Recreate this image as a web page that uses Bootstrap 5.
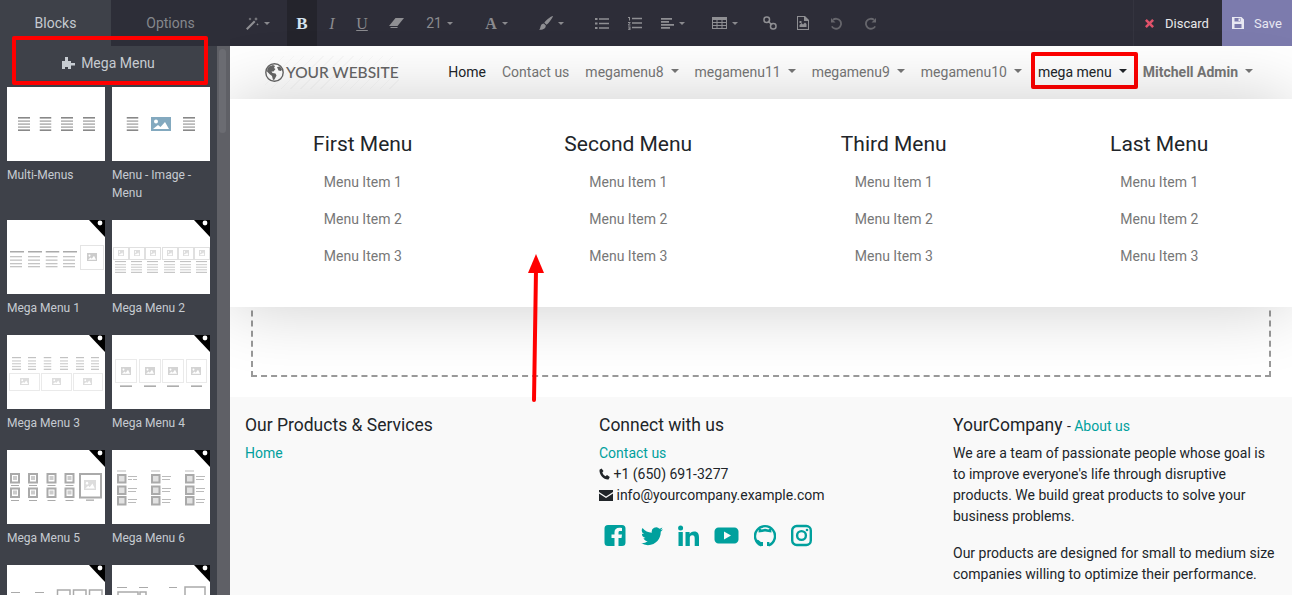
<!DOCTYPE html>
<html lang="en">
<head>
  <meta charset="UTF-8">
  <title>Website editor - Mega Menu</title>
  <link rel="stylesheet" href="https://cdn.jsdelivr.net/npm/bootstrap@5.3.2/dist/css/bootstrap.min.css">
  <style>
    html, body { height: 100%; overflow: hidden; }
    body { font-family: Roboto, "Liberation Sans", sans-serif; font-size: 14px; line-height: 21px; color: #212529; background: #fff; }
    a { text-decoration: none; }
    .app-wrap { width: 1292px; height: 595px; overflow: hidden; }

    /* left panel */
    .side-panel { width: 230px; flex: 0 0 230px; background: #3e4149; color: #c6cbd1; overflow: hidden; }
    .side-tabs { height: 46px; }
    .side-tab { height: 46px; line-height: 46px; text-align: center; }
    .tab-blocks { width: 111px; color: #c6cbd1; }
    .tab-options { width: 119px; background: #2d2e38; color: #85878c; }
    .side-body { height: 549px; }
    .side-scroll { width: 217px; flex: 0 0 217px; overflow: hidden; }
    .side-track { width: 13px; flex: 0 0 13px; background: #5f6066; padding: 3px 4px 0 2px; }
    .side-thumb { height: 84px; background: #6b6c72; border-radius: 4px; }
    .side-head { height: 41px; padding-top: 7px; gap: 6px; }
    .snippet-grid { display: grid; grid-template-columns: 98px 98px; column-gap: 7px; padding-left: 7px; align-items: start; }
    .snippet-item { margin-bottom: 18px; }
    .snippet-thumb { display: block; width: 98px; height: 74px; background: #fff; }
    .snippet-label { display: block; margin-top: 5px; font-size: 12px; line-height: 18px; color: #c6cbd1; }

    /* top toolbar */
    .edit-bar { height: 46px; background: #2d2d38; color: #8a8a8e; }
    .tb-btn { height: 46px; gap: 5px; }
    .tb-btn svg { fill: #8f8f93; display: block; }
    .tb-btn svg.ico-line { fill: none; stroke: #8f8f93; stroke-width: 1.5; }
    .tb-btn svg.ico-undo { fill: none; stroke: #66666c; stroke-width: 1.8; }
    .tb-btn svg .ico-tip { fill: #66666c; stroke: none; }
    .tb-caret { width: 0; height: 0; border-left: 3px solid transparent; border-right: 3px solid transparent; border-top: 3px solid #8a8a8e; }
    .tb-serif { font-family: "Liberation Serif", serif; font-size: 16px; }
    .tb-w30 { width: 30px; }
    .tb-w33 { width: 33px; }
    .tb-w35 { width: 35px; }
    .tb-w40 { width: 40px; }
    .tb-active { background: #24242c; color: #d5e3f0; font-weight: 700; font-size: 17px; }
    .tb-sp3 { margin-left: 3px; } .tb-sp9 { margin-left: 9px; } .tb-sp10 { margin-left: 10px; } .tb-sp12 { margin-left: 12px; }
    .tb-sp18 { margin-left: 18px; } .tb-sp20 { margin-left: 20px; } .tb-sp22 { margin-left: 22px; }
    .tb-discard { width: 89px; height: 46px; color: #e8e8ea; border-left: 1px solid #34343f; padding-left: 11px; gap: 11px; font-size: 13px; }
    .tb-discard svg { fill: #e0526a; }
    .tb-save { width: 70px; height: 46px; background: #7c7bad; color: #e8e8f2; padding-left: 10px; gap: 10px; font-size: 13px; }
    .tb-save svg { fill: #e8e8f2; }

    /* site area */
    .site-area { width: 1062px; flex: 0 0 1062px; overflow: hidden; }
    .site-nav { height: 53px; padding: 0 31px 0 35px; background: #fff; }
    .site-logo { font-family: Lato, "Liberation Sans", sans-serif; font-size: 15.5px; font-weight: 500; color: #666; gap: 2px;
      background: repeating-linear-gradient(135deg, transparent 0 6px, rgba(0,0,0,.025) 6px 7px); padding: 6px 0; }
    .site-nav .nav-link { padding: 8px; color: #777; line-height: 21px; }
    .site-nav .nav-link.is-current { color: #212529; }
    .site-nav .nav-link.is-user { font-weight: 700; }
    .site-nav .dropdown-toggle::after { margin-left: 7px; border-top-width: 4px; border-left-width: 4px; border-right-width: 4px; }
    .mega-panel { position: absolute; top: 53px; left: 0; width: 100%; border: 0; border-radius: 0; margin: 0; padding: 33px 0 32px;
      display: block; font-size: 14px; box-shadow: 0 0 70px rgba(0,0,0,.2); z-index: 5; }
    .mega-title { font-size: 21px; line-height: 24px; font-weight: 400; margin-bottom: 8px; color: #212529; }
    .mega-entry { padding: 8px; color: #777; line-height: 21px; }
    .drop-zone { height: 298px; padding: 20px 21px 20px 21px; background: #fff; }
    .drop-box { height: 100%; border: 2px dashed #999; }

    .site-foot { background: #f9f9f9; padding-top: 16px; height: 198px; }
    .foot-title { font-size: 17.5px; line-height: 24px; font-weight: 400; margin-bottom: 6px; color: #212529; }
    .foot-col { width: 354px; flex: 0 0 354px; padding: 0 15px; }
    .foot-link { color: #00a09d; }
    .foot-inline { font-size: 14px; line-height: 1; }
    .foot-social { margin-top: 18px; padding-left: 5px; gap: 15px; }
    .foot-social svg { fill: #00a09d; display: block; height: 23px; }
    .foot-social svg.ico-stroke { fill: none; stroke: #00a09d; stroke-width: 2.4; }
    .foot-social svg .ico-solid { fill: #00a09d; stroke: none; }
    .foot-text p { margin-bottom: 16px; }
    .foot-glyph { display: inline-block; vertical-align: -1px; fill: #212529; }

    /* annotations over the picture */
    .mark-box { position: absolute; border: 4px solid #f00; border-radius: 2px; }
    .mark-head { left: 12px; top: 36px; width: 196px; height: 49px; }
    .mark-nav { left: 1031px; top: 52px; width: 107px; height: 37px; }
    .mark-arrow { position: absolute; left: 520px; top: 250px; z-index: 9; }
  </style>
</head>
<body>

<svg width="0" height="0" class="position-absolute">
  <defs>
    <symbol id="ln" viewBox="0 0 12 14" preserveAspectRatio="none">
      <rect width="12" height="1.6" y="0" fill="#888"/>
      <rect width="12" height="1.4" y="3.4" fill="#aaa"/>
      <rect width="12" height="1.4" y="6.4" fill="#aaa"/>
      <rect width="12" height="1.4" y="9.4" fill="#aaa"/>
      <rect width="12" height="1.6" y="12.4" fill="#888"/>
    </symbol>
    <symbol id="lnp" viewBox="0 0 12 14" preserveAspectRatio="none">
      <rect width="12" height="1.3" y="0" fill="#c2c2c2"/>
      <rect width="12" height="1.3" y="3.6" fill="#cfcfcf"/>
      <rect width="12" height="1.3" y="6.6" fill="#cfcfcf"/>
      <rect width="12" height="1.3" y="9.6" fill="#cfcfcf"/>
      <rect width="12" height="1.3" y="12.6" fill="#c2c2c2"/>
    </symbol>
    <symbol id="lnl" viewBox="0 0 14 18" preserveAspectRatio="none">
      <rect width="14" height="1.5" y="1" fill="#aaa"/>
      <rect x="0" width="12" height="1.3" y="6" fill="#c4c4c4"/>
      <rect x="0" width="12" height="1.3" y="9.5" fill="#c4c4c4"/>
      <rect x="0" width="12" height="1.3" y="13" fill="#c4c4c4"/>
      <rect x="0" width="12" height="1.3" y="16" fill="#c4c4c4"/>
    </symbol>
    <symbol id="pic" viewBox="0 0 20 14" preserveAspectRatio="none">
      <rect width="20" height="14" fill="currentColor"/>
      <circle cx="5" cy="4.5" r="2" fill="#fff"/>
      <path d="M2 12l5-4 2.5 2 4.500-5 4 7z" fill="#fff"/>
    </symbol>
    <symbol id="corner" viewBox="0 0 98 74">
      <polygon points="82,0 98,0 98,17" fill="#000"/>
      <circle cx="93" cy="3" r="2.4" fill="#fff"/>
    </symbol>
  </defs>
</svg>

<div class="app-wrap d-flex position-relative">

  <!-- Blocks panel -->
  <aside class="side-panel">
    <div class="side-tabs d-flex">
      <div class="side-tab tab-blocks">Blocks</div>
      <div class="side-tab tab-options">Options</div>
    </div>
    <div class="side-body d-flex">
      <div class="side-scroll">
        <div class="side-head d-flex justify-content-center">
          <svg width="13" height="12" viewBox="0 0 13 12" class="mt-1" fill="#c6cbd1"><path d="M3 0h3v4h3v2h4v2.500H9V12H6v-2H3v2H0V4h3z"/></svg>
          <span>Mega Menu</span>
        </div>
        <div class="snippet-grid">
          <div class="snippet-item">
            <svg class="snippet-thumb" viewBox="0 0 98 74">
              <use href="#ln" x="11" y="30" width="12" height="14"/><use href="#ln" x="32.500" y="30" width="12" height="14"/>
              <use href="#ln" x="54" y="30" width="12" height="14"/><use href="#ln" x="76" y="30" width="12" height="14"/>
            </svg>
            <span class="snippet-label">Multi-Menus</span>
          </div>
          <div class="snippet-item">
            <svg class="snippet-thumb" viewBox="0 0 98 74">
              <use href="#ln" x="14.500" y="30" width="12" height="14"/>
              <use href="#pic" x="39" y="30" width="20" height="14" color="#83a9bf"/>
              <use href="#ln" x="71" y="30" width="12" height="14"/>
            </svg>
            <span class="snippet-label">Menu - Image - Menu</span>
          </div>
          <div class="snippet-item">
            <svg class="snippet-thumb" viewBox="0 0 98 74">
              <use href="#lnl" x="3" y="30" width="14" height="18"/><use href="#lnl" x="21" y="30" width="14" height="18"/>
              <use href="#lnl" x="38.500" y="30" width="14" height="18"/><use href="#lnl" x="56" y="30" width="14" height="18"/>
              <rect x="73.500" y="25.500" width="23" height="24" fill="none" stroke="#e4e4e4"/>
              <use href="#pic" x="80" y="33" width="10" height="8" color="#ccc"/>
              <use href="#corner"/>
            </svg>
            <span class="snippet-label">Mega Menu 1</span>
          </div>
          <div class="snippet-item">
            <svg class="snippet-thumb" viewBox="0 0 98 74">
              <g fill="none" stroke="#e0e0e0">
                <rect x="1.500" y="27.500" width="15" height="12"/><rect x="17.500" y="27.500" width="15" height="12"/><rect x="33.500" y="27.500" width="15" height="12"/>
                <rect x="50.500" y="27.500" width="15" height="12"/><rect x="66.500" y="27.500" width="15" height="12"/><rect x="82.500" y="27.500" width="15" height="12"/>
              </g>
              <use href="#pic" x="6" y="30" width="6" height="6" color="#ddd"/><use href="#pic" x="22" y="30" width="6" height="6" color="#ddd"/>
              <use href="#pic" x="38" y="30" width="6" height="6" color="#ddd"/><use href="#pic" x="55" y="30" width="6" height="6" color="#ddd"/>
              <use href="#pic" x="71" y="30" width="6" height="6" color="#ddd"/><use href="#pic" x="87" y="30" width="6" height="6" color="#ddd"/>
              <use href="#lnp" x="3" y="41" width="11" height="12"/><use href="#lnp" x="19" y="41" width="11" height="12"/>
              <use href="#lnp" x="35" y="41" width="11" height="12"/><use href="#lnp" x="52" y="41" width="11" height="12"/>
              <use href="#lnp" x="68" y="41" width="11" height="12"/><use href="#lnp" x="84" y="41" width="11" height="12"/>
              <use href="#corner"/>
            </svg>
            <span class="snippet-label">Mega Menu 2</span>
          </div>
          <div class="snippet-item">
            <svg class="snippet-thumb" viewBox="0 0 98 74">
              <use href="#lnp" x="5" y="22" width="9" height="13"/><use href="#lnp" x="21" y="22" width="8" height="13"/>
              <use href="#lnp" x="36.500" y="22" width="8" height="13"/><use href="#lnp" x="53" y="22" width="8" height="13"/>
              <use href="#lnp" x="69" y="22" width="8" height="13"/><use href="#lnp" x="84" y="22" width="8" height="13"/>
              <g fill="none" stroke="#eaeaea">
                <rect x="2.500" y="38.500" width="30" height="17"/><rect x="34.500" y="38.500" width="30" height="17"/><rect x="66.500" y="38.500" width="29" height="17"/>
              </g>
              <use href="#pic" x="13" y="43" width="9" height="7" color="#ddd"/><use href="#pic" x="45" y="43" width="9" height="7" color="#ddd"/><use href="#pic" x="76" y="43" width="9" height="7" color="#ddd"/>
              <use href="#corner"/>
            </svg>
            <span class="snippet-label">Mega Menu 3</span>
          </div>
          <div class="snippet-item">
            <svg class="snippet-thumb" viewBox="0 0 98 74">
              <g fill="none" stroke="#eaeaea">
                <rect x="3.500" y="24.500" width="21" height="23"/><rect x="27.500" y="24.500" width="21" height="23"/><rect x="50.500" y="24.500" width="21" height="23"/><rect x="74.500" y="24.500" width="20" height="23"/>
              </g>
              <use href="#pic" x="9" y="32" width="10" height="8" color="#d4d4d4"/><use href="#pic" x="33" y="32" width="10" height="8" color="#d4d4d4"/>
              <use href="#pic" x="56" y="32" width="10" height="8" color="#d4d4d4"/><use href="#pic" x="79" y="32" width="10" height="8" color="#d4d4d4"/>
              <g fill="#999"><rect x="8" y="50.500" width="12" height="1.300"/><rect x="32" y="50.500" width="12" height="1.300"/><rect x="55" y="50.500" width="12" height="1.300"/><rect x="79" y="50.500" width="11" height="1.300"/></g>
              <use href="#corner"/>
            </svg>
            <span class="snippet-label">Mega Menu 4</span>
          </div>
          <div class="snippet-item">
            <svg class="snippet-thumb" viewBox="0 0 98 74">
              <g fill="none" stroke="#aaa" stroke-width="2">
                <rect x="4" y="24" width="8" height="8.500"/><rect x="22" y="24" width="8" height="8.500"/><rect x="40.500" y="24" width="8" height="8.500"/><rect x="58.500" y="24" width="8" height="8.500"/>
                <rect x="4" y="38.500" width="8" height="8.500"/><rect x="22" y="38.500" width="8" height="8.500"/><rect x="40.500" y="38.500" width="8" height="8.500"/><rect x="58.500" y="38.500" width="8" height="8.500"/>
                <rect x="73" y="24" width="21" height="23.500"/>
              </g>
              <g fill="#ccc"><rect x="6" y="26" width="4" height="4"/><rect x="24" y="26" width="4" height="4"/><rect x="42.500" y="26" width="4" height="4"/><rect x="60.500" y="26" width="4" height="4"/>
                <rect x="6" y="40.500" width="4" height="4"/><rect x="24" y="40.500" width="4" height="4"/><rect x="42.500" y="40.500" width="4" height="4"/><rect x="60.500" y="40.500" width="4" height="4"/></g>
              <use href="#pic" x="77" y="30" width="12" height="10" color="#ddd"/>
              <g fill="#aaa"><rect x="4" y="35" width="8" height="1"/><rect x="22" y="35" width="8" height="1"/><rect x="40.500" y="35" width="8" height="1"/><rect x="58.500" y="35" width="8" height="1"/>
                <rect x="4" y="50" width="8" height="1"/><rect x="22" y="50" width="8" height="1"/><rect x="40.500" y="50" width="8" height="1"/><rect x="58.500" y="50" width="8" height="1"/><rect x="79" y="49.500" width="8" height="1.300"/></g>
              <use href="#corner"/>
            </svg>
            <span class="snippet-label">Mega Menu 5</span>
          </div>
          <div class="snippet-item">
            <svg class="snippet-thumb" viewBox="0 0 98 74">
              <g fill="#e2e2e2" stroke="#aaa" stroke-width="2">
                <rect x="6" y="25" width="7.500" height="7.500"/><rect x="6" y="36.500" width="7.500" height="7.500"/><rect x="6" y="47" width="7.500" height="7.500"/>
                <rect x="40" y="25" width="7.500" height="7.500"/><rect x="40" y="36.500" width="7.500" height="7.500"/><rect x="40" y="47" width="7.500" height="7.500"/>
                <rect x="74" y="25" width="7.500" height="7.500"/><rect x="74" y="36.500" width="7.500" height="7.500"/><rect x="74" y="47" width="7.500" height="7.500"/>
              </g>
              <g fill="#bbb">
                <rect x="5" y="20.500" width="9" height="1"/><rect x="39" y="20.500" width="9" height="1"/><rect x="73" y="20.500" width="9" height="1"/>
                <rect x="16" y="26" width="9" height="1"/><rect x="16" y="29" width="4" height="1"/><rect x="21" y="29" width="4" height="1"/>
                <rect x="16" y="38" width="9" height="1"/><rect x="16" y="41" width="8" height="1"/>
                <rect x="16" y="49" width="9" height="1"/><rect x="16" y="52" width="8" height="1"/>
                <rect x="50" y="26" width="9" height="1"/><rect x="50" y="29" width="8" height="1"/>
                <rect x="50" y="38" width="9" height="1"/><rect x="50" y="41" width="8" height="1"/>
                <rect x="50" y="49" width="9" height="1"/><rect x="50" y="52" width="8" height="1"/>
                <rect x="84" y="26" width="9" height="1"/><rect x="84" y="29" width="8" height="1"/>
                <rect x="84" y="38" width="9" height="1"/><rect x="84" y="41" width="8" height="1"/>
                <rect x="84" y="49" width="9" height="1"/><rect x="84" y="52" width="8" height="1"/>
              </g>
              <use href="#corner"/>
            </svg>
            <span class="snippet-label">Mega Menu 6</span>
          </div>
          <div class="snippet-item">
            <svg class="snippet-thumb" viewBox="0 0 98 74">
              <g fill="#aaa"><rect x="4" y="27" width="9" height="1"/><rect x="28" y="27" width="9" height="1"/></g>
              <g fill="none" stroke="#aaa" stroke-width="1.500"><rect x="50.500" y="25" width="12.500" height="20"/><rect x="66.500" y="25" width="12.500" height="20"/><rect x="82.500" y="25" width="12.500" height="20"/></g>
              <use href="#corner"/>
            </svg>
          </div>
          <div class="snippet-item">
            <svg class="snippet-thumb" viewBox="0 0 98 74">
              <g fill="#aaa"><rect x="5" y="22" width="10" height="1"/><rect x="27" y="22" width="9" height="1"/><rect x="57" y="22" width="8" height="1"/></g>
              <g fill="none" stroke="#aaa" stroke-width="1.500"><rect x="6" y="27" width="20" height="18"/><rect x="28" y="27" width="6" height="18"/><rect x="73" y="22" width="20" height="20"/></g>
              <use href="#corner"/>
            </svg>
          </div>
        </div>
      </div>
      <div class="side-track"><div class="side-thumb"></div></div>
    </div>
  </aside>

  <!-- Editor and page -->
  <div class="site-area">
    <div class="edit-bar d-flex">
      <div class="tb-btn tb-w35 tb-sp10 d-flex align-items-center justify-content-center">
        <svg width="13" height="13" viewBox="0 0 13 13"><path d="M0 11.500L8 3.500 9.500 5 1.500 13zM10 0l.6 1.400L12 2l-1.400.6L10 4l-.6-1.400L8 2l1.400-.6zM4 .5l.5 1 1 .5-1 .5-.5 1-.5-1-1-.5 1-.5zM11.500 6l.4 1 1 .4-1 .4-.4 1-.4-1-1-.4 1-.4z"/></svg>
        <span class="tb-caret"></span>
      </div>
      <div class="tb-btn tb-w30 tb-sp12 tb-active tb-serif d-flex align-items-center justify-content-center">B</div>
      <div class="tb-btn tb-w30 tb-serif fst-italic d-flex align-items-center justify-content-center">I</div>
      <div class="tb-btn tb-w30 tb-serif text-decoration-underline d-flex align-items-center justify-content-center">U</div>
      <div class="tb-btn tb-w33 tb-sp3 d-flex align-items-center justify-content-center">
        <svg width="15" height="11" viewBox="0 0 15 11"><path d="M6.500 0H15L8.500 8H3L0 8z M1.500 9h7v1h-7z" fill-rule="evenodd"/></svg>
      </div>
      <div class="tb-btn tb-w35 tb-sp9 d-flex align-items-center justify-content-center"><span>21</span><span class="tb-caret"></span></div>
      <div class="tb-btn tb-w35 tb-sp22 tb-serif fw-bold d-flex align-items-center justify-content-center"><span>A</span><span class="tb-caret"></span></div>
      <div class="tb-btn tb-w35 tb-sp20 d-flex align-items-center justify-content-center">
        <svg width="14" height="14" viewBox="0 0 14 14"><path d="M13.500 0c.4 0 .5.300.3.700C12 4 9.500 7.500 7.500 8.800L5.300 6.700C7 4.500 11 .800 13.500 0zM4.800 7.500l2 2C6.800 12 5 14 0 13.800c1.500-1 1-2.500 2-4.500.6-1.100 1.700-1.700 2.800-1.800z"/></svg>
        <span class="tb-caret"></span>
      </div>
      <div class="tb-btn tb-w30 tb-sp18 d-flex align-items-center justify-content-center">
        <svg width="14" height="11" viewBox="0 0 14 11"><path d="M0 0h2.500v2H0zM4 .3h10v1.500H4zM0 4.500h2.500v2H0zM4 4.800h10v1.500H4zM0 9h2.500v2H0zM4 9.300h10v1.500H4z"/></svg>
      </div>
      <div class="tb-btn tb-w30 tb-sp3 d-flex align-items-center justify-content-center">
        <svg width="14" height="13" viewBox="0 0 14 13"><path d="M0 0h2v3.500H1V1H0zM4 .8h10v1.500H4zM0 5h2.500v1L1 7.500h1.500v1H0v-1L1.500 6H0zM4 5.300h10v1.500H4zM0 9.500h2.500V13H0v-.8h1.500v-.5H.5V11h1v-.6H0zM4 9.800h10v1.500H4z"/></svg>
      </div>
      <div class="tb-btn tb-w40 tb-sp3 d-flex align-items-center justify-content-center">
        <svg width="13" height="11" viewBox="0 0 13 11"><path d="M0 0h11v1.800H0zM0 3h8v1.800H0zM0 6h13v1.800H0zM0 9h9v1.800H0z"/></svg>
        <span class="tb-caret"></span>
      </div>
      <div class="tb-btn tb-w40 tb-sp12 d-flex align-items-center justify-content-center">
        <svg width="15" height="12" viewBox="0 0 15 12"><path fill-rule="evenodd" d="M0 0h15v12H0zM1 3v2h3.500V3zm4.500 0v2h4V3zm5 0v2H14V3zM1 6v2h3.500V6zm4.500 0v2h4V6zm5 0v2H14V6zM1 9v2h3.500V9zm4.500 0v2h4V9zm5 0v2H14V9z"/></svg>
        <span class="tb-caret"></span>
      </div>
      <div class="tb-btn tb-w30 tb-sp10 d-flex align-items-center justify-content-center">
        <svg class="ico-line" width="14" height="14" viewBox="0 0 14 14"><rect x="1" y="1" width="5.500" height="5.500" rx="2.500"/><rect x="7.500" y="7.500" width="5.500" height="5.500" rx="2.500"/><path d="M5 5l4 4"/></svg>
      </div>
      <div class="tb-btn tb-w30 tb-sp3 d-flex align-items-center justify-content-center">
        <svg width="12" height="14" viewBox="0 0 12 14"><path fill-rule="evenodd" d="M0 0h8l4 4v10H0zM1 1v12h10V5H7V1zM2.500 11V9l2-2 1.500 1.500L8 6.500 9.500 8v3zM2.500 5h2v2h-2z"/></svg>
      </div>
      <div class="tb-btn tb-w30 tb-sp3 d-flex align-items-center justify-content-center">
        <svg class="ico-undo" width="13" height="13" viewBox="0 0 13 13"><path d="M3 2.800a5 5 0 1 1-1.200 6.600"/><path class="ico-tip" d="M1 1l0 4.500 4.500 0z"/></svg>
      </div>
      <div class="tb-btn tb-w30 d-flex align-items-center justify-content-center ms-1">
        <svg class="ico-undo" width="13" height="13" viewBox="0 0 13 13"><path d="M10 2.800a5 5 0 1 0 1.200 6.600"/><path class="ico-tip" d="M12 1l0 4.500-4.500 0z"/></svg>
      </div>
      <div class="ms-auto d-flex">
        <div class="tb-discard d-flex align-items-center">
          <svg width="9" height="9" viewBox="0 0 9 9"><path d="M1.800 0L4.500 2.700 7.200 0 9 1.800 6.300 4.500 9 7.200 7.200 9 4.500 6.300 1.800 9 0 7.200 2.700 4.500 0 1.800z"/></svg>
          <span>Discard</span>
        </div>
        <div class="tb-save d-flex align-items-center">
          <svg width="12" height="12" viewBox="0 0 12 12"><path fill-rule="evenodd" d="M0 0h9.500L12 2.500V12H0zM2.500 1v3.500h6V1zM6.500 1.500H8v2.500H6.500zM2.500 7v4h7V7z"/></svg>
          <span>Save</span>
        </div>
      </div>
    </div>

    <div class="position-relative">
      <nav class="site-nav navbar navbar-expand flex-nowrap">
        <a class="site-logo d-flex align-items-center" href="#">
          <svg width="19" height="19" viewBox="0 0 19 19"><circle cx="9.500" cy="9.500" r="8.700" fill="#fff" stroke="#666" stroke-width="1.400"/><path fill="#666" d="M4 3.500l4-1.500 2 1-1 2 1.500 1-2 2.500H6.500L7.500 10l3 .5 1 2-2 4-1.500.5-1-4-2-1.500-3-3 .5-3zM12 4l3-.5 2 3-1 1.500-2.500-.5z"/></svg>
          <span>YOUR WEBSITE</span>
        </a>
        <ul class="navbar-nav ms-auto">
          <li class="nav-item"><a class="nav-link is-current" href="#">Home</a></li>
          <li class="nav-item"><a class="nav-link" href="#">Contact us</a></li>
          <li class="nav-item"><a class="nav-link dropdown-toggle" href="#">megamenu8</a></li>
          <li class="nav-item"><a class="nav-link dropdown-toggle" href="#">megamenu11</a></li>
          <li class="nav-item"><a class="nav-link dropdown-toggle" href="#">megamenu9</a></li>
          <li class="nav-item"><a class="nav-link dropdown-toggle" href="#">megamenu10</a></li>
          <li class="nav-item"><a class="nav-link dropdown-toggle is-current" href="#">mega menu</a></li>
          <li class="nav-item"><a class="nav-link dropdown-toggle is-user" href="#">Mitchell Admin</a></li>
        </ul>
      </nav>

      <div class="dropdown-menu mega-panel">
        <div class="row g-0 text-center">
          <div class="col-3">
            <h5 class="mega-title">First Menu</h5>
            <div class="mega-entry">Menu Item 1</div><div class="mega-entry">Menu Item 2</div><div class="mega-entry">Menu Item 3</div>
          </div>
          <div class="col-3">
            <h5 class="mega-title">Second Menu</h5>
            <div class="mega-entry">Menu Item 1</div><div class="mega-entry">Menu Item 2</div><div class="mega-entry">Menu Item 3</div>
          </div>
          <div class="col-3">
            <h5 class="mega-title">Third Menu</h5>
            <div class="mega-entry">Menu Item 1</div><div class="mega-entry">Menu Item 2</div><div class="mega-entry">Menu Item 3</div>
          </div>
          <div class="col-3">
            <h5 class="mega-title">Last Menu</h5>
            <div class="mega-entry">Menu Item 1</div><div class="mega-entry">Menu Item 2</div><div class="mega-entry">Menu Item 3</div>
          </div>
        </div>
      </div>

      <div class="drop-zone"><div class="drop-box"></div></div>

      <footer class="site-foot d-flex">
        <div class="foot-col">
          <h5 class="foot-title">Our Products &amp; Services</h5>
          <a class="foot-link" href="#">Home</a>
        </div>
        <div class="foot-col">
          <h5 class="foot-title">Connect with us</h5>
          <div><a class="foot-link" href="#">Contact us</a></div>
          <div>
            <svg class="foot-glyph" width="11" height="12" viewBox="0 0 11 12"><path d="M2.500.5L4.500 3 3.300 4.500c.5 1.500 1.700 3 3.200 3.700L8 7l2.800 2-1.300 2.500C5 12 0 7 .5 1.800z"/></svg>
            +1 (650) 691-3277
          </div>
          <div>
            <svg class="foot-glyph" width="14" height="11" viewBox="0 0 14 11"><path d="M0 0h14v2L7 6.500 0 2zM0 3.500L7 8l7-4.500V11H0z"/></svg>
            info@yourcompany.example.com
          </div>
          <div class="foot-social d-flex align-items-center">
            <svg width="22" viewBox="0 0 22 23"><path fill-rule="evenodd" d="M4 1h14A3.500 3.500 0 0 1 21.500 4.500v14a3.500 3.500 0 0 1-3.500 3.500H14.500v-8h3l.5-3.500h-3.500V8.500c0-1 .4-1.500 1.600-1.500H18V4c-.8-.1-1.800-.2-2.800-.2-2.800 0-4.700 1.700-4.700 4.500v2.200h-3V14h3v8H4A3.500 3.500 0 0 1 .5 18.500v-14A3.500 3.500 0 0 1 4 1z"/></svg>
            <svg width="22" viewBox="0 0 16 16"><path d="M5.026 15c6.038 0 9.341-5.003 9.341-9.334 0-.14 0-.282-.006-.422A6.685 6.685 0 0 0 16 3.542a6.658 6.658 0 0 1-1.889.518 3.301 3.301 0 0 0 1.447-1.817 6.533 6.533 0 0 1-2.087.793A3.286 3.286 0 0 0 7.875 6.030a9.325 9.325 0 0 1-6.767-3.429 3.289 3.289 0 0 0 1.018 4.382A3.323 3.323 0 0 1 .64 6.575v.045a3.288 3.288 0 0 0 2.632 3.218 3.203 3.203 0 0 1-.865.115 3.230 3.230 0 0 1-.614-.057 3.283 3.283 0 0 0 3.067 2.277A6.588 6.588 0 0 1 .78 13.580a6.320 6.320 0 0 1-.78-.045A9.344 9.344 0 0 0 5.026 15z"/></svg>
            <svg width="21" viewBox="0 0 21 23"><path d="M.5 8h4.300v14H.5zM2.600 1.500a2.500 2.500 0 1 1 0 5 2.500 2.500 0 0 1 0-5zM7.500 8h4.100v2c.7-1.300 2.300-2.400 4.500-2.400 4 0 4.900 2.600 4.900 6.200V22h-4.300v-7.300c0-1.800-.3-3.400-2.400-3.400-2.200 0-2.500 1.600-2.500 3.400V22H7.500z"/></svg>
            <svg width="25" viewBox="0 0 25 23"><path fill-rule="evenodd" d="M4.500 3.500h16c2.200 0 4 1.800 4 4v8c0 2.200-1.800 4-4 4h-16c-2.200 0-4-1.800-4-4v-8c0-2.200 1.800-4 4-4zM10 7.500v8l7-4z"/></svg>
            <svg class="ico-stroke" width="22" viewBox="0 0 22 23"><path d="M7.500 21.500A10 10 0 1 1 14.500 21.500"/><path d="M7.800 22v-4M14.200 22v-4M3 17c2 0 2.300 2.300 4.800 2.300"/><path class="ico-solid" d="M5 3.500l2.500 2 3.500-.8 3.500.8 2.500-2 .5 5-6.500-1-6.500 1z"/></svg>
            <svg class="ico-stroke" width="21" viewBox="0 0 21 23"><rect x="1.200" y="2" width="18.600" height="19" rx="4.500"/><circle cx="10.500" cy="11.500" r="4.400"/><circle class="ico-solid" cx="16" cy="6" r="1.300"/></svg>
          </div>
        </div>
        <div class="foot-col foot-text">
          <h5 class="foot-title">YourCompany <span class="foot-inline">- <a class="foot-link" href="#">About us</a></span></h5>
          <p>We are a team of passionate people whose goal is to improve everyone's life through disruptive products. We build great products to solve your business problems.</p>
          <p>Our products are designed for small to medium size companies willing to optimize their performance.</p>
        </div>
      </footer>
    </div>
  </div>

  <!-- Red annotations -->
  <div class="mark-box mark-head"></div>
  <div class="mark-box mark-nav"></div>
  <svg class="mark-arrow" width="32" height="155" viewBox="0 0 32 155">
    <path d="M14 150L16 20" stroke="#f00" stroke-width="4" stroke-linecap="round" fill="none"/>
    <polygon points="16,4 24,23 8,23" fill="#f00"/>
  </svg>
</div>

</body>
</html>
